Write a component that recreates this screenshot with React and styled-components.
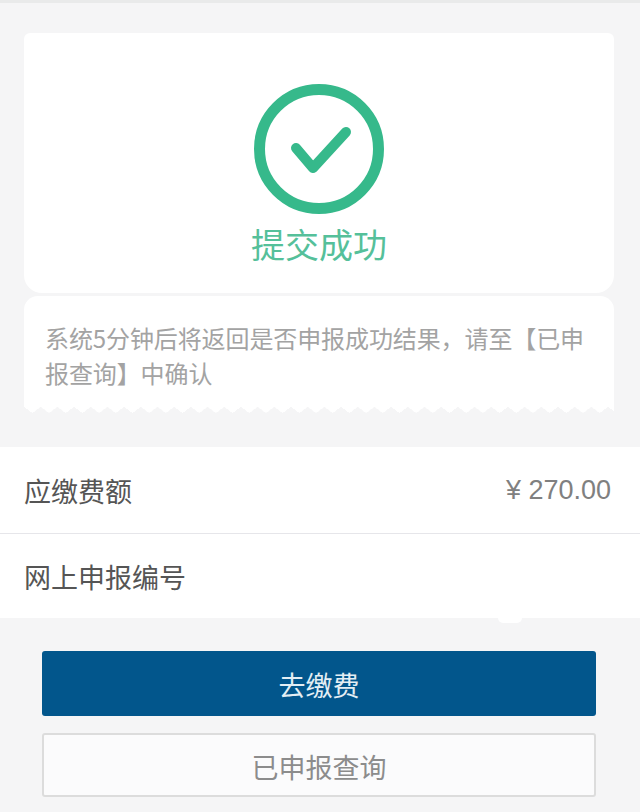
import React from "react";
import styled, { createGlobalStyle } from "styled-components";

const GlobalStyle = createGlobalStyle`
  html, body {
    margin: 0;
    padding: 0;
    background: #f5f5f6;
    font-family: "Noto Sans CJK SC", "Liberation Sans", sans-serif;
  }
`;

const Page = styled.div`
  width: 640px;
  height: 812px;
  overflow: hidden;
  display: flex;
  flex-direction: column;
  background: #f5f5f6;
  border-top: 3px solid #e9eaea;
  box-sizing: border-box;
`;

const Receipt = styled.section`
  display: flex;
  flex-direction: column;
  gap: 3px;
  padding: 30px 26px 0 24px;
`;

const ResultCard = styled.div`
  height: 260px;
  padding-top: 51px;
  box-sizing: border-box;
  background: #fff;
  border-radius: 6px 6px 18px 18px;
  display: flex;
  flex-direction: column;
  align-items: center;
`;

const Title = styled.h1`
  margin: 5px 0 0;
  font-size: 34px;
  line-height: 50px;
  font-weight: 400;
  color: #55c09a;
`;

const NoticeCard = styled.div`
  position: relative;
  height: 111px;
  padding: 24px 20px 0 21px;
  box-sizing: border-box;
  background: #fff;
  border-radius: 14px 14px 0 0;
  font-size: 24px;
  line-height: 35px;
  color: #a3a3a3;
  letter-spacing: -0.1px;

  &::after {
    content: "";
    position: absolute;
    left: 0;
    right: 0;
    top: 100%;
    height: 6px;
    background: conic-gradient(from -54.3deg at 50% 100%, #fff 108.6deg, transparent 0) 0 0 / 16.7px 6px repeat-x;
  }
`;

const InfoList = styled.div`
  position: relative;
  margin-top: 40px;
  background: #fff;

  &::after {
    content: "";
    position: absolute;
    left: 498px;
    top: 100%;
    width: 24px;
    height: 5px;
    background: #fff;
    border-radius: 0 0 10px 10px;
  }
`;

const InfoRow = styled.div`
  height: 86px;
  box-sizing: border-box;
  padding: 0 29px 0 24px;
  display: flex;
  align-items: center;
  justify-content: space-between;
  font-size: 27px;
  color: #555;

  & + & {
    border-top: 1px solid #e6e6ea;
    height: 85px;
  }
`;

const Amount = styled.span`
  font-family: "Liberation Sans", "Noto Sans CJK SC", sans-serif;
  font-size: 27px;
  color: #808080;
`;

const Actions = styled.div`
  margin-top: 33px;
  padding: 0 44px 0 42px;
  display: flex;
  flex-direction: column;
  gap: 17px;
`;

const Button = styled.button`
  height: ${(p) => (p.$primary ? "65px" : "64px")};
  padding: 2px 0 0;
  box-sizing: border-box;
  border-radius: 3px;
  font-family: inherit;
  font-size: 27px;
  border: ${(p) => (p.$primary ? "none" : "2px solid #dcdcdc")};
  background: ${(p) => (p.$primary ? "#02568c" : "#fbfbfc")};
  color: ${(p) => (p.$primary ? "#e4eef4" : "#8c8c8c")};
`;

function SuccessIcon() {
  return (
    <svg width="130" height="130" viewBox="0 0 130 130" fill="none">
      <circle cx="65" cy="65" r="59.5" stroke="#36b98b" strokeWidth="11" />
      <path
        d="M42 64 L59 84 L92 48"
        stroke="#36b98b"
        strokeWidth="10"
        strokeLinecap="round"
        strokeLinejoin="round"
      />
    </svg>
  );
}

export default function App() {
  return (
    <>
      <GlobalStyle />
      <Page>
        <Receipt>
          <ResultCard>
            <SuccessIcon />
            <Title>提交成功</Title>
          </ResultCard>
          <NoticeCard>系统5分钟后将返回是否申报成功结果，请至【已申报查询】中确认</NoticeCard>
        </Receipt>
        <InfoList>
          <InfoRow>
            <span>应缴费额</span>
            <Amount>¥ 270.00</Amount>
          </InfoRow>
          <InfoRow>
            <span>网上申报编号</span>
          </InfoRow>
        </InfoList>
        <Actions>
          <Button $primary>去缴费</Button>
          <Button>已申报查询</Button>
        </Actions>
      </Page>
    </>
  );
}
